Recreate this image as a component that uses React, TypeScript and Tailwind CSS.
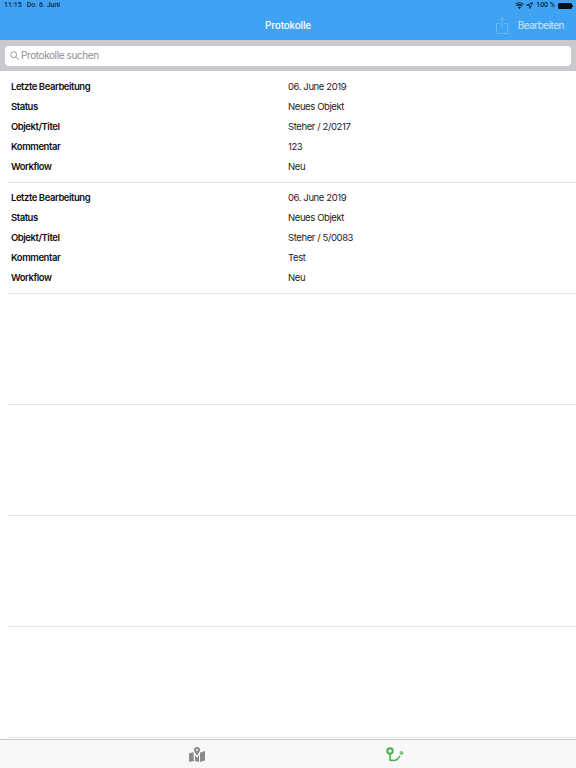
import React from 'react';

const records = [
  { date: '06. June 2019', status: 'Neues Objekt', title: 'Steher / 2/0217', comment: '123', workflow: 'Neu' },
  { date: '06. June 2019', status: 'Neues Objekt', title: 'Steher / 5/0083', comment: 'Test', workflow: 'Neu' },
  null,
  null,
  null,
  null,
];

const Row = ({ label, value }: { label: string; value: string }) => (
  <div className="flex h-5 items-center text-[9.5px] tracking-[-0.4px]">
    <div className="w-[288px] pl-[11px] font-semibold tracking-[-0.45px] text-[#111]">{label}</div>
    <div className="text-[#222]">{value}</div>
  </div>
);

const App: React.FC = () => {
  return (
    <div className="flex h-[768px] w-[576px] flex-col overflow-hidden bg-white font-['Inter','Liberation_Sans',sans-serif]">
      <div className="h-10 shrink-0 bg-[#3fa2f3]">
        <div className="flex h-[11px] items-center justify-between pl-1 pr-[3px] font-['Roboto',sans-serif] text-[7px] font-medium text-[#10253a]">
          <div className="flex gap-[5px]">
            <span>11:15</span>
            <span>Do. 6. Juni</span>
          </div>
          <div className="flex items-center gap-[2px]">
            <svg width="9" height="7" viewBox="0 0 18 14" fill="#10253a">
              <path d="M9 14 6 10.6a4.4 4.4 0 0 1 6 0zM4.6 9 2.8 7a9 9 0 0 1 12.4 0l-1.8 2a6.4 6.4 0 0 0-8.8 0zM1.6 5.7 0 3.9a13 13 0 0 1 18 0l-1.6 1.8a10.700 10.700 0 0 0-14.800 0z" />
            </svg>
            <svg width="7" height="7" viewBox="0 0 14 14" fill="none" stroke="#10253a" strokeWidth="1.800">
              <path d="M13 1 1 6.500l6 .5.500 6z" />
            </svg>
            <span className="ml-[1px]">100 %</span>
            <div className="ml-[1px] flex items-center">
              <div className="h-[6px] w-[14px] rounded-[1.5px] bg-[#0a0f14]" />
              <div className="h-[2px] w-[1px] bg-[#10253a]" />
            </div>
          </div>
        </div>
        <div className="relative flex h-[29px] items-center justify-center">
          <span className="text-[10px] font-medium tracking-[-0.2px] text-white">Protokolle</span>
          <div className="absolute right-[12px] top-0 flex h-[29px] items-center">
            <svg width="12" height="17" viewBox="0 0 12 17" fill="none" stroke="#6cb8f6" strokeWidth="1" className="mr-[10px]">
              <path d="M3.500 6.500H.5v10h11v-10H8.500M6 11V.8M3.500 3 6 .8 8.500 3" />
            </svg>
            <span className="text-[10px] tracking-[-0.5px] text-[#cfe7fb]">Bearbeiten</span>
          </div>
        </div>
      </div>

      <div className="flex h-[31px] shrink-0 items-center bg-[#c9c9ce] px-[5px]">
        <div className="flex h-5 w-full items-center gap-[2px] rounded-[4px] bg-white px-[5px]">
          <svg width="9" height="9" viewBox="0 0 16 16" fill="none" stroke="#8e8e93" strokeWidth="1.600">
            <circle cx="6.500" cy="6.500" r="5.300" />
            <path d="m10.500 10.500 5 5" />
          </svg>
          <span className="text-[10px] tracking-[-0.4px] text-[#8e8e93]">Protokolle suchen</span>
        </div>
      </div>

      <div className="flex-1">
        {records.map((record, i) => (
          <div key={i} className="h-[111.100px] pl-2">
            <div className="-ml-2 flex h-[111px] flex-col pt-[6px]">
              {record && (
                <>
                  <Row label="Letzte Bearbeitung" value={record.date} />
                  <Row label="Status" value={record.status} />
                  <Row label="Objekt/Titel" value={record.title} />
                  <Row label="Kommentar" value={record.comment} />
                  <Row label="Workflow" value={record.workflow} />
                </>
              )}
            </div>
            <div className="h-px bg-[#e3e3e5]" />
          </div>
        ))}
      </div>

      <div className="flex h-[29px] shrink-0 border-t border-[#c8c8ca] bg-[#f8f8f8] pl-[98px]">
        <div className="flex w-[198px] items-center justify-center">
          <svg width="16" height="15" viewBox="0 0 16 15" fill="#8a8a8a" className="mt-[1px]">
            <path d="M8 0a3 3 0 0 1 3 3c0 1.800-2 4-3 5.500C7 7 5 4.800 5 3a3 3 0 0 1 3-3zm0 2a1 1 0 1 0 0 2 1 1 0 0 0 0-2z" />
            <path d="M0 6.500 4.500 5l.5 9-5 1zM6 8l2 2.800L10 8v7l-4-1zM11 5.500 16 4v9.500L11 15z" />
          </svg>
        </div>
        <div className="flex w-[198px] items-center justify-center">
          <svg width="18" height="15" viewBox="0 0 18 15" fill="none" className="mt-[1px]">
            <circle cx="4" cy="4" r="2.700" stroke="#4caf50" strokeWidth="2" />
            <path d="M4 7v6c3 .8 5 .8 7-.5l3-3.500" stroke="#4caf50" strokeWidth="1.500" />
            <circle cx="15.500" cy="6" r="1.900" fill="#7cc67f" />
          </svg>
        </div>
      </div>
    </div>
  );
};

export default App;
